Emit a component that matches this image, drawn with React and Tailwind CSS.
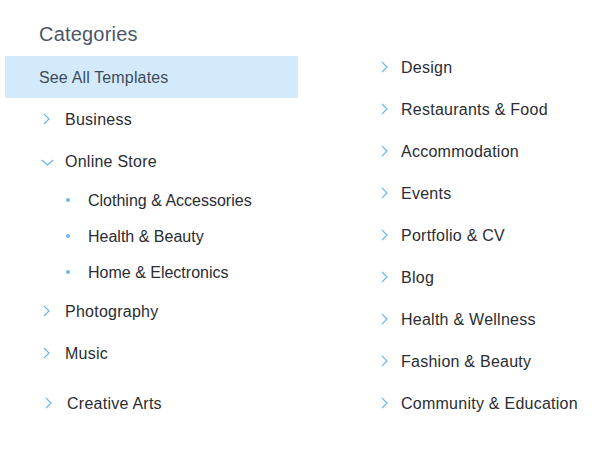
import React from 'react';

const leftItems = [
  { label: 'Business', state: 'closed' },
  {
    label: 'Online Store',
    state: 'open',
    children: ['Clothing & Accessories', 'Health & Beauty', 'Home & Electronics'],
  },
  { label: 'Photography', state: 'closed' },
  { label: 'Music', state: 'closed' },
];

const rightItems = [
  'Design',
  'Restaurants & Food',
  'Accommodation',
  'Events',
  'Portfolio & CV',
  'Blog',
  'Health & Wellness',
  'Fashion & Beauty',
  'Community & Education',
];

const ChevronRight = () => (
  <svg width="7" height="12" viewBox="0 0 7 12" fill="none">
    <polyline points="1,0.8 6,6 1,11.2" stroke="#5fb2ef" strokeWidth="1.1" />
  </svg>
);

const ChevronDown = () => (
  <svg width="13" height="7" viewBox="0 0 13 7" fill="none">
    <polyline points="0.8,1 6.5,6 12.2,1" stroke="#5fb2ef" strokeWidth="1.1" />
  </svg>
);

const CategoryRow = ({ label, open }) => (
  <div className="flex h-[42px] items-center">
    <span className="flex w-[60px] justify-end pr-[14px]">
      {open ? (
        <span className="mr-[-3px] mt-[2px] flex">
          <ChevronDown />
        </span>
      ) : (
        <span className="mr-[1px] flex">
          <ChevronRight />
        </span>
      )}
    </span>
    <span className="pt-[2px] text-[16px] tracking-[0.25px] text-[#2a2d31]">{label}</span>
  </div>
);

export default function App() {
  return (
    <div
      className="flex h-[454px] w-[595px] bg-white"
      style={{ fontFamily: '"Liberation Sans", Arial, sans-serif' }}
    >
      {/* left column */}
      <div className="ml-[5px] w-[293px]">
        <div className="h-[56px] pl-[34px] pt-[22px] text-[20px] leading-[24px] tracking-[0.2px] text-[#4a5767]">
          Categories
        </div>
        <div className="flex h-[42px] items-center bg-[#d3eafc] pl-[34px] pt-[2px] text-[16px] tracking-[0.15px] text-[#3e4a58]">
          See All Templates
        </div>
        {leftItems.map((item) => (
          <div key={item.label}>
            <CategoryRow label={item.label} open={item.state === 'open'} />
            {item.children && (
              <div>
                {item.children.map((child) => (
                  <div key={child} className="flex h-[36px] items-center">
                    <span className="ml-[61px] mr-[18px] h-[4px] w-[4px] rounded-full bg-[#6cb8ef]" />
                    <span className="pt-[2px] text-[16px] text-[#2a2d31]">{child}</span>
                  </div>
                ))}
              </div>
            )}
          </div>
        ))}
        <div className="ml-[2px] mt-[8px]">
          <CategoryRow label="Creative Arts" />
        </div>
      </div>

      {/* right column */}
      <div className="ml-[83px] pt-[46px]">
        {rightItems.map((label) => (
          <div key={label} className="flex h-[42px] items-center">
            <span className="mr-[13px] flex">
              <ChevronRight />
            </span>
            <span className="pt-[2px] text-[16px] tracking-[0.25px] text-[#2a2d31]">{label}</span>
          </div>
        ))}
      </div>
    </div>
  );
}
